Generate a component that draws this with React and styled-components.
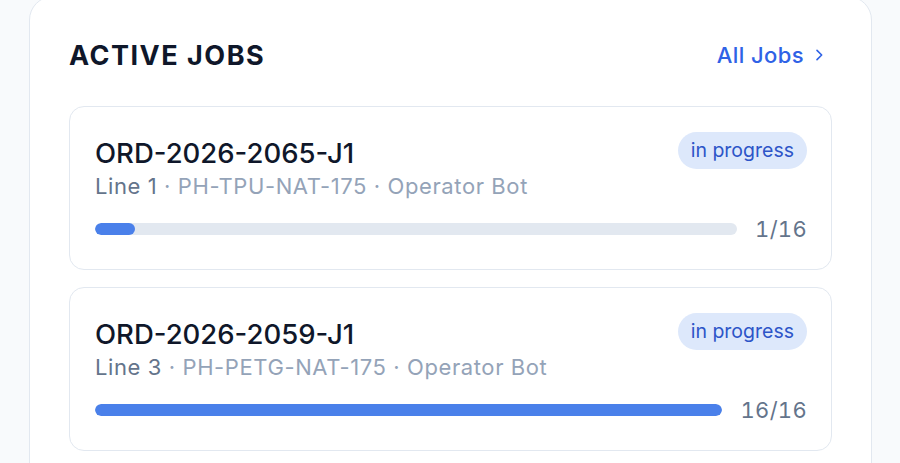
import React from 'react';
import styled, { createGlobalStyle } from 'styled-components';

const jobs = [
	{
		id: 'ORD-2026-2065-J1',
		line: 'Line 1',
		material: 'PH-TPU-NAT-175',
		operator: 'Operator Bot',
		status: 'in progress',
		done: 1,
		total: 16
	},
	{
		id: 'ORD-2026-2059-J1',
		line: 'Line 3',
		material: 'PH-PETG-NAT-175',
		operator: 'Operator Bot',
		status: 'in progress',
		done: 16,
		total: 16
	}
];

export default function App() {
	return (
		<>
			<GlobalStyle />
			<Page>
				<Panel>
					<Header>
						<Heading>Active Jobs</Heading>
						<HeaderLink href="#">
							All Jobs
							<svg width="16" height="16" viewBox="0 0 24 24" fill="none" stroke="currentColor" strokeWidth="2.4" strokeLinecap="round" strokeLinejoin="round">
								<path d="M9 5l7 7-7 7" />
							</svg>
						</HeaderLink>
					</Header>
					<JobList>
						{jobs.map(job => (
							<JobCard key={job.id}>
								<TopRow>
									<JobTitle>{job.id}</JobTitle>
									<Badge>{job.status}</Badge>
								</TopRow>
								<Meta>
									<MetaLine>{job.line}</MetaLine> · {job.material} · {job.operator}
								</Meta>
								<ProgressRow>
									<Track>
										<Fill style={{ width: `${(job.done / job.total) * 100}%` }} />
									</Track>
									<Count>{job.done}/{job.total}</Count>
								</ProgressRow>
							</JobCard>
						))}
					</JobList>
				</Panel>
			</Page>
		</>
	);
}

const GlobalStyle = createGlobalStyle`
	* {
		box-sizing: border-box;
	}

	body {
		margin: 0;
		background: #f8fafc;
		font-family: Inter, "Noto Sans", sans-serif;
		-webkit-font-smoothing: antialiased;
	}
`;

const Page = styled.div`
	height: 463px;
	overflow: hidden;
	padding: 0 28px 0 29px;
`;

const Panel = styled.section`
	margin-top: -4px;
	background: #fff;
	border: 1.5px solid #e2e8f0;
	border-radius: 24px;
	padding: 36px 39px 40px 39px;
`;

const Header = styled.div`
	display: flex;
	align-items: center;
	justify-content: space-between;
	height: 44px;
	margin-bottom: 29px;
`;

const Heading = styled.h2`
	margin: 0;
	font-size: 27px;
	font-weight: 700;
	letter-spacing: 1.5px;
	text-transform: uppercase;
	color: #0f172a;
`;

const HeaderLink = styled.a`
	display: flex;
	align-items: center;
	gap: 7px;
	font-size: 22px;
	font-weight: 500;
	letter-spacing: 0.4px;
	color: #2f62e6;
	text-decoration: none;
	margin-right: 5px;
`;

const JobList = styled.div`
	display: flex;
	flex-direction: column;
	gap: 17px;
`;

const JobCard = styled.div`
	border: 1.5px solid #e2e8f0;
	border-radius: 15px;
	padding: 23px 24px 22px 25px;
	height: 164px;
`;

const TopRow = styled.div`
	display: flex;
	align-items: center;
	justify-content: space-between;
	height: 40px;
`;

const JobTitle = styled.div`
	font-size: 27.5px;
	font-weight: 500;
	color: #0f172a;
	margin-top: 5px;
`;

const Badge = styled.span`
	display: inline-flex;
	align-items: center;
	height: 37px;
	padding: 0 13px;
	border-radius: 999px;
	background: #dde8fb;
	color: #2d55c8;
	font-size: 19.5px;
	font-weight: 400;
`;

const Meta = styled.div`
	margin-top: 1px;
	font-size: 22px;
	letter-spacing: 0.6px;
	line-height: 30px;
	color: #94a3b8;
`;

const MetaLine = styled.span`
	color: #64748b;
`;

const ProgressRow = styled.div`
	display: flex;
	align-items: center;
	gap: 18px;
	margin-top: 12px;
`;

const Track = styled.div`
	flex: 1;
	height: 12px;
	border-radius: 999px;
	background: #e2e8f0;
	overflow: hidden;
`;

const Fill = styled.div`
	height: 100%;
	border-radius: 999px;
	background: #4a80ea;
`;

const Count = styled.span`
	font-size: 22px;
	font-variant-numeric: tabular-nums;
	letter-spacing: 0.3px;
	color: #64748b;
	line-height: 32px;
`;
